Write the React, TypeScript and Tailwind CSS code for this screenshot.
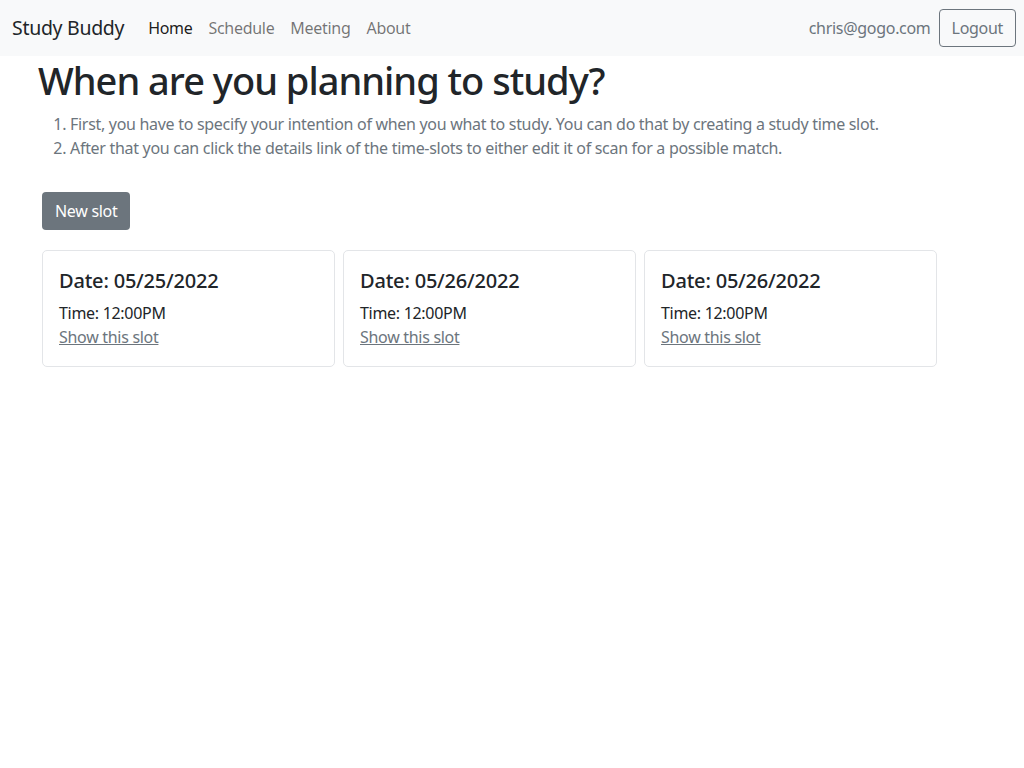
import React from 'react';

const slots = [
  { date: '05/25/2022', time: '12:00PM' },
  { date: '05/26/2022', time: '12:00PM' },
  { date: '05/26/2022', time: '12:00PM' },
];

const SlotCard: React.FC<{ date: string; time: string }> = ({ date, time }) => (
  <div className="w-[293px] rounded-[5px] border border-[#e3e5e8] bg-white px-4 pb-[17px] pt-[18px]">
    <h5 className="mb-2 text-[20px] font-medium leading-6 tracking-[-0.2px] text-[#212529]">Date: {date}</h5>
    <p className="text-[16px] leading-6 text-[#212529]">Time: {time}</p>
    <a href="#" className="text-[16px] leading-6 text-[#6c757d] underline">
      Show this slot
    </a>
  </div>
);

export default function App() {
  return (
    <div
      className="min-h-screen bg-white tracking-[-0.3px] text-[#212529]"
      style={{ fontFamily: '"Noto Sans", "Open Sans", sans-serif' }}
    >
      <nav className="flex h-14 items-center justify-between bg-[#f8f9fa] pl-3 pr-2">
        <div className="flex items-center">
          <a href="#" className="mr-6 text-[19.5px] leading-[30px] text-[#212529]">Study Buddy</a>
          <ul className="flex items-center gap-4 text-[16px]">
            <li className="text-[rgba(0,0,0,0.9)]">Home</li>
            <li className="text-[rgba(0,0,0,0.55)]">Schedule</li>
            <li className="text-[rgba(0,0,0,0.55)]">Meeting</li>
            <li className="text-[rgba(0,0,0,0.55)]">About</li>
          </ul>
        </div>
        <div className="flex items-center gap-2">
          <span className="text-[16px] text-[#6c757d]">chris@gogo.com</span>
          <button className="h-[38px] rounded-[4px] border border-[#6c757d] px-3 text-[16px] text-[#6c757d]">Logout</button>
        </div>
      </nav>

      <main className="px-[38px]">
        <h1 className="mb-2 text-[38px] font-medium leading-[48px] tracking-[-1px]">When are you planning to study?</h1>
        <ol className="mb-4 list-decimal pl-8 text-[16px] leading-6 text-[#6c757d]">
          <li>First, you have to specify your intention of when you what to study. You can do that by creating a study time slot.</li>
          <li>After that you can click the details link of the time-slots to either edit it of scan for a possible match.</li>
        </ol>
        <div className="pl-1 pt-4">
          <button className="h-[38px] rounded-[4px] bg-[#6c757d] px-[13px] text-[16px] text-white">New slot</button>
          <div className="mt-5 flex gap-2">
            {slots.map((s, i) => (
              <SlotCard key={i} date={s.date} time={s.time} />
            ))}
          </div>
        </div>
      </main>
    </div>
  );
}
